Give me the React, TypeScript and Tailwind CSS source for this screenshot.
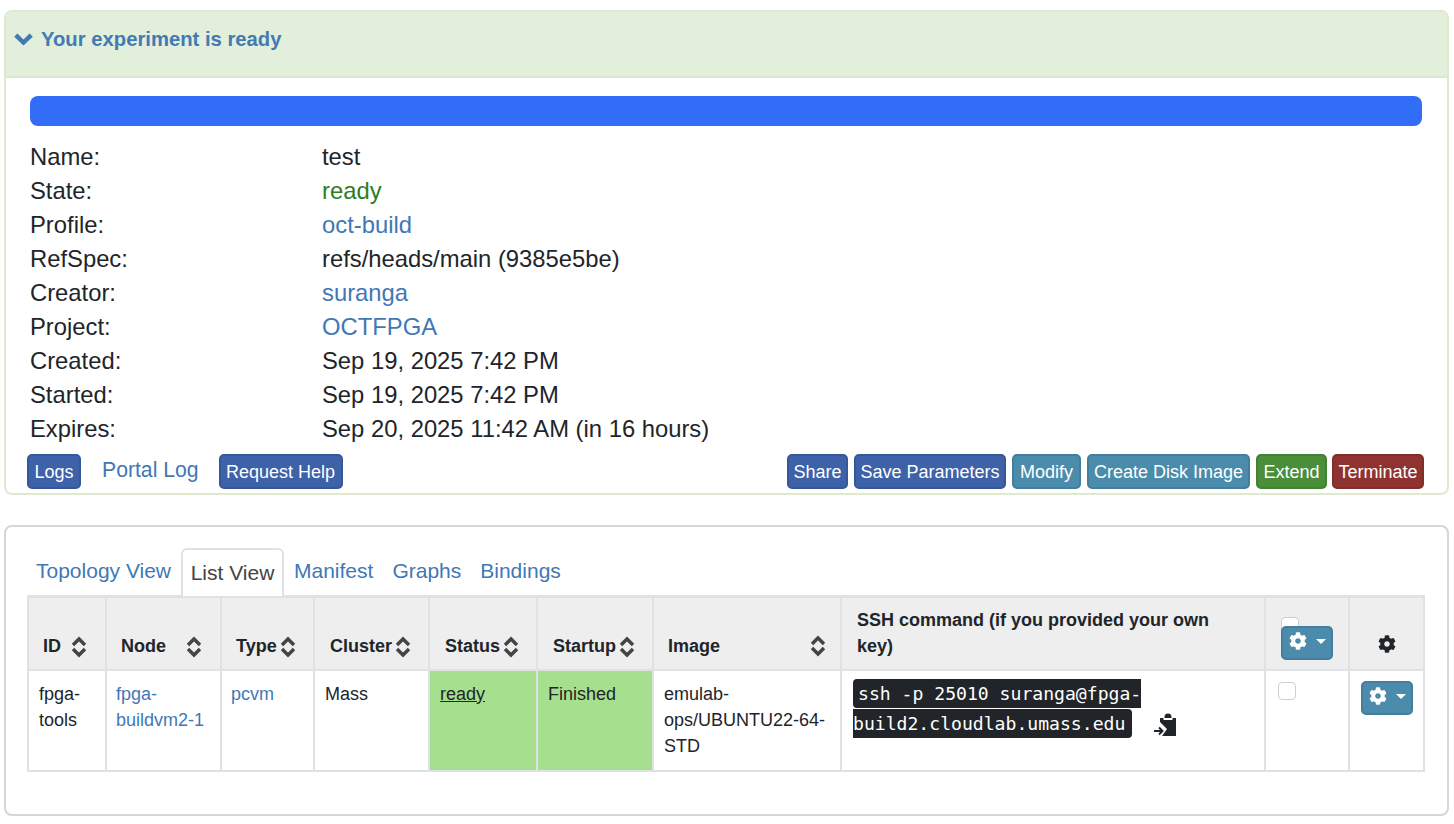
import { FaCog } from "react-icons/fa";

const font = { fontFamily: '"Liberation Sans", Arial, sans-serif' };

const info = [
  { label: "Name:", value: "test" },
  { label: "State:", value: "ready", cls: "text-[#2f7d1f]" },
  { label: "Profile:", value: "oct-build", cls: "text-[#3f78b5]" },
  { label: "RefSpec:", value: "refs/heads/main (9385e5be)" },
  { label: "Creator:", value: "suranga", cls: "text-[#3f78b5]" },
  { label: "Project:", value: "OCTFPGA", cls: "text-[#3f78b5]" },
  { label: "Created:", value: "Sep 19, 2025 7:42 PM" },
  { label: "Started:", value: "Sep 19, 2025 7:42 PM" },
  { label: "Expires:", value: "Sep 20, 2025 11:42 AM (in 16 hours)" },
];

function Btn({ children, cls }: any) {
  return <button className={`h-[35px] px-0 rounded-[5px] border-2 text-white text-[18px] leading-none whitespace-nowrap ${cls}`}>{children}</button>;
}

const blue = "bg-[#3d62a8] border-[#36589a]";
const teal = "bg-[#4b8bab] border-[#447e9c]";

function Sort() {
  return (
    <svg width="16" height="22" viewBox="0 0 16 22" className="inline-block align-middle" fill="none" stroke="#444" strokeWidth="3.4">
      <path d="M2 9 L8 3 L14 9" />
      <path d="M2 13 L8 19 L14 13" />
    </svg>
  );
}

function Gear() {
  return (
    <button className="w-[52px] h-[34px] flex items-center pl-[6px] pb-[3px] rounded-[5px] border-2 bg-[#4b8bab] border-[#447e9c] text-white">
      <FaCog size={18} />
      <svg width="10" height="5" viewBox="0 0 10 5" className="ml-[9px]" fill="#fff">
        <path d="M0 0 H10 L5 5 Z" />
      </svg>
    </button>
  );
}

function Clip() {
  return (
    <svg width="24" height="24" viewBox="0 0 24 24" className="inline-block ml-[22px] -my-[6px] align-[-1px]" fill="#212529">
      <path d="M10.500 4 A3.500 3.500 0 0 1 17.500 4 V5 H10.500 Z" />
      <path d="M6 5 H9.500 V7 H18.500 V5 H22 V23 H8 L13 16 L6 9 Z" />
      <path d="M0 18 H8 M5 14.500 L8.500 18 L5 21.500" fill="none" stroke="#212529" strokeWidth="2" />
    </svg>
  );
}

const th = "border-2 border-t-[3px] border-[#dee2e6] bg-[#eeeeee] font-bold text-left align-bottom pb-[10px] px-[14px]";
const td = "border-2 border-[#dee2e6] align-top pt-[10px] px-[9px] h-[101px]";

function Check({ cls }: any) {
  return <div className={`w-[18px] h-[18px] rounded-[4px] border border-[#cfcfcf] bg-white ${cls}`} />;
}

export default function App() {
  return (
    <div className="w-[1454px] h-[824px] bg-white overflow-hidden pt-[10px] pl-[4px] text-[#212529]" style={font}>
      <div className="w-[1445px] h-[485px] border-2 border-[#dfe9d0] rounded-[8px] overflow-hidden">
        <div className="h-[66px] bg-[#e2efdb] border-b-2 border-[#dbe8cf] flex items-center pl-[8px] pb-[9px] text-[#437ab3] text-[20.25px] font-bold">
          <svg width="19" height="13" viewBox="0 0 20 14" className="mr-[8px]" fill="#437ab3">
            <path d="M0 4 L3.500 0.500 L10 7 L16.500 0.500 L20 4 L10 13.500 Z" />
          </svg>
          Your experiment is ready
        </div>
        <div className="pl-[24px] pr-[24px] pt-[18px]">
          <div className="h-[30px] w-[1392px] bg-[#316df6] rounded-[8px]" />
          <div className="mt-[14px] text-[23.8px] leading-[34px]">
            {info.map((r) => (
              <div key={r.label} className="flex">
                <div className="w-[292px]">{r.label}</div>
                <div className={r.cls}>{r.value}</div>
              </div>
            ))}
          </div>
          <div className="flex items-start -ml-[3px] mt-[8px] w-[1397px]">
            <Btn cls={`w-[54px] ${blue}`}>Logs</Btn>
            <a className="ml-[21px] text-[21.2px] leading-[31px] text-[#3f78b5]">Portal Log</a>
            <div className="ml-[20px]"><Btn cls={`w-[124px] ${blue}`}>Request Help</Btn></div>
            <div className="ml-auto flex gap-[6px]">
              <Btn cls={`w-[61px] ${blue}`}>Share</Btn>
              <Btn cls={`w-[152px] ${blue}`}>Save Parameters</Btn>
              <Btn cls={`w-[69px] ${teal}`}>Modify</Btn>
              <Btn cls={`w-[163px] ${teal}`}>Create Disk Image</Btn>
              <Btn cls="w-[71px] bg-[#4a8e3a] border-[#438134]">Extend</Btn>
              <Btn cls="w-[92px] -ml-[1px] bg-[#8f3330] border-[#822e2b]">Terminate</Btn>
            </div>
          </div>
        </div>
      </div>

      <div className="w-[1445px] h-[291px] mt-[30px] border-2 border-[#d6d6d6] rounded-[8px] pl-[21px] pt-[20px]">
        <div className="flex items-end h-[48px] text-[21px] text-[#3f78b5] relative z-10">
          <a className="ml-[9px] w-[146px] pb-[9px]">Topology View</a>
          <a className="w-[103px] h-[48px] -ml-[1px] -mb-[1px] border-2 border-b-0 border-[#dee2e6] rounded-t-[6px] bg-white text-[#444] flex items-center justify-center">List View</a>
          <a className="ml-[10px] pb-[9px]">Manifest</a>
          <a className="ml-[19px] pb-[9px]">Graphs</a>
          <a className="ml-[19px] pb-[9px]">Bindings</a>
        </div>
        <table className="border-collapse table-fixed w-[1396px] text-[18px] leading-[26px]">
          <colgroup>
            <col className="w-[78px]" />
            <col className="w-[115px]" />
            <col className="w-[93px]" />
            <col className="w-[115px]" />
            <col className="w-[108px]" />
            <col className="w-[116px]" />
            <col className="w-[188px]" />
            <col className="w-[424px]" />
            <col className="w-[84px]" />
            <col className="w-[75px]" />
          </colgroup>
          <thead>
            <tr className="h-[73px]">
              <th className={th}>ID <span className="ml-[5px]"><Sort /></span></th>
              <th className={th}>Node <span className="ml-[15px]"><Sort /></span></th>
              <th className={th}>Type <span className="-ml-[2px]"><Sort /></span></th>
              <th className={`${th} !pl-[15px]`}>Cluster <span className="-ml-[2px]"><Sort /></span></th>
              <th className={`${th} !pl-[15px]`}>Status <span className="-ml-[2px]"><Sort /></span></th>
              <th className={`${th} !pl-[15px]`}>Startup <span className="-ml-[2px]"><Sort /></span></th>
              <th className={th}><div className="flex justify-between items-center"><span>Image</span><Sort /></div></th>
              <th className={`${th} !pl-[15px]`}>SSH command (if you provided your own key)</th>
              <th className={`${th} !pb-[9px] !pl-[15px]`}>
                <Check cls="-mb-[9px]" />
                <div className="relative"><Gear /></div>
              </th>
              <th className={`${th} !text-center !pb-[13px]`}>
                <FaCog size={18} className="inline-block" />
              </th>
            </tr>
          </thead>
          <tbody>
            <tr>
              <td className={`${td} !pl-[10px]`}>fpga-tools</td>
              <td className={`${td} text-[#3f78b5]`}>fpga-buildvm2-1</td>
              <td className={`${td} text-[#3f78b5]`}>pcvm</td>
              <td className={`${td} !pl-[10px]`}>Mass</td>
              <td className={`${td} !pl-[10px] bg-[#a6e08e]`}><span className="underline">ready</span></td>
              <td className={`${td} !pl-[10px] bg-[#a6e08e]`}>Finished</td>
              <td className={`${td} !pl-[10px]`}>emulab-ops/UBUNTU22-64-STD</td>
              <td className={`${td} !pt-[8px] !pl-[11px]`}>
                <div className="leading-[30px]">
                  <code className="bg-[#212529] text-white pl-[5px] pr-[7px] py-[4px] rounded-[4px] text-[18.1px]" style={{ fontFamily: '"DejaVu Sans Mono", monospace' }}>ssh -p 25010 suranga@fpga-build2.cloudlab.umass.edu</code>
                  <Clip />
                </div>
              </td>
              <td className={`${td} !pl-[12px]`}><Check cls="mt-[1px]" /></td>
              <td className={`${td} !pl-[11px]`}><Gear /></td>
            </tr>
          </tbody>
        </table>
      </div>
    </div>
  );
}
